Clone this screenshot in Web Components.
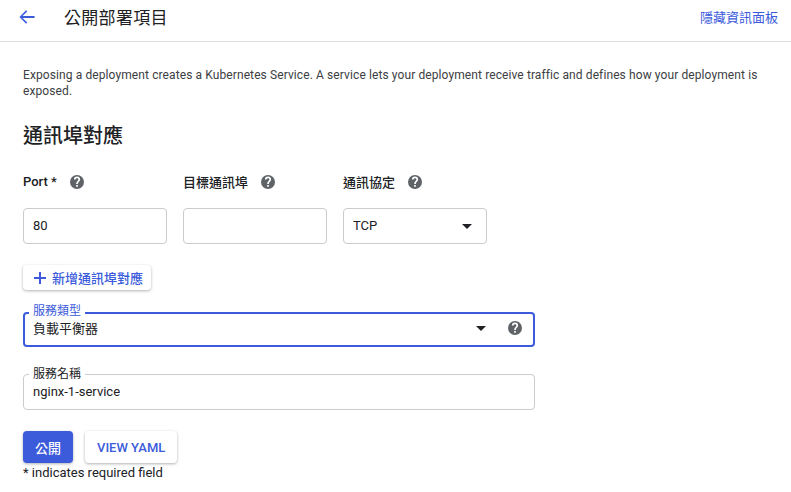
<!DOCTYPE html>
<html lang="zh-Hant">
<head>
<meta charset="utf-8">
<style>
  html, body { margin: 0; background: #fff; height: 492px; overflow: hidden; }
  body { font-family: Roboto, "Noto Sans CJK TC", sans-serif; color: #202124; }
</style>
</head>
<body>
<template id="help-icon-tpl">
  <style>
    :host { display: inline-flex; width: 14px; height: 14px; flex: none; }
    svg { width: 14px; height: 14px; fill: #5f6368; }
  </style>
  <svg viewBox="0.5 0.5 23 23"><path fill-rule="evenodd" d="M12 0.500a11.500 11.500 0 1 0 0 23 11.500 11.500 0 0 0 0-23zm1.400 19.400h-2.800v-2.800h2.800zm2.500-9-1.100 1.100c-.9.900-1.300 1.600-1.300 3.200h-2.800v-.7c0-1.300.5-2.500 1.400-3.400l1.500-1.500c.4-.4.700-1 .7-1.600a2.300 2.300 0 0 0-4.600 0H6.900a5.100 5.100 0 0 1 10.200 0c0 1.100-.4 2.100-1.200 2.900z"/></svg>
</template>

<template id="page-header-tpl">
  <style>
    :host { display: flex; align-items: center; height: 33px; padding: 0 13px 8px 19px; border-bottom: 1px solid #dadce0; }
    svg { width: 16px; height: 16px; fill: #3b5bdb; flex: none; }
    h1 { margin: 0 0 0 29px; font-size: 17px; font-weight: 400; color: #202124; letter-spacing: 0.3px; flex: 1; }
    a { font-size: 13px; color: #3b5bdb; }
  </style>
  <svg viewBox="0 0 18 18"><path d="M17.500 8H4l5.300-5.300L8 1.400.5 9 8 16.600l1.300-1.300L4 10h13.500z"/></svg>
  <h1><slot></slot></h1>
  <a><slot name="action"></slot></a>
</template>

<template id="field-label-tpl">
  <style>
    :host { display: flex; align-items: center; width: 144px; height: 16px; font-size: 13px; font-weight: 500; color: #202124; gap: 13px; }
    span { margin-top: -1px; }
  </style>
  <span><slot></slot></span><help-icon></help-icon>
</template>

<template id="text-box-tpl">
  <style>
    :host { display: flex; align-items: center; justify-content: space-between; width: 144px; height: 36px; box-sizing: border-box; border: 1px solid #ccc; border-radius: 4px; padding: 0 14px 0 9px; font-size: 13px; color: #202124; }
    span { margin-top: -1px; }
    i { width: 0; height: 0; border: 5px solid transparent; border-top-color: #202124; border-bottom: 0; display: var(--caret, none); }
  </style>
  <span><slot></slot></span><i></i>
</template>

<template id="outlined-field-tpl">
  <style>
    :host { display: block; width: 512px; }
    fieldset { margin: 0; padding: 0 14px 0 9px; box-sizing: border-box; width: 512px; height: 42px; border: 1px solid #ccc; border-radius: 4px; display: flex; align-items: center; font-size: 13px; color: #202124; }
    :host([focused]) fieldset { border: 2px solid #3b5bdb; padding: 0 11px 0 8px; height: 40px; }
    legend { font-size: 12px; line-height: 12px; padding: 0 4px; margin-left: -4px; color: #202124; }
    legend span { position: relative; top: var(--legend-shift, 0); }
    :host([focused]) legend { color: #3b5bdb; --legend-shift: -2px; }
    .row { display: flex; align-items: center; width: 100%; height: 100%; margin-top: var(--row-shift, -7px); }
    :host([focused]) .row { --row-shift: -10px; }
    .val { flex: 1; }
    i { width: 0; height: 0; border: 5px solid transparent; border-top-color: #202124; border-bottom: 0; margin: 2px 22px 0 0; }
    help-icon { margin-top: 2px; }
    :host(:not([focused])) i, :host(:not([focused])) help-icon { display: none; }
  </style>
  <fieldset>
    <legend><span></span></legend>
    <div class="row"><span class="val"><slot></slot></span><i></i><help-icon></help-icon></div>
  </fieldset>
</template>

<template id="ui-button-tpl">
  <style>
    :host { display: inline-flex; align-items: center; justify-content: center; box-sizing: border-box; height: var(--h, 32px); padding: 0 12px; border-radius: 4px; background: #fff; color: #3b5bdb; font-size: 13px; font-weight: 500; box-shadow: 0 1px 3px rgba(60,64,67,.4); gap: 6px; }
    :host([primary]) { background: #3b5bdb; color: #fff; }
    svg { width: 12px; height: 12px; fill: #3b5bdb; }
    :host(:not([add])) svg { display: none; }
  </style>
  <svg viewBox="0 0 12 12"><path d="M5 0h2v5h5v2H7v5H5V7H0V5h5z"/></svg><slot></slot>
</template>

<template id="expose-form-tpl">
  <style>
    :host { display: block; padding: 25px 23px 0; }
    p { margin: 0; font-size: 12px; line-height: 16px; color: #3c4043; width: 745px; letter-spacing: .1px; }
    h2 { margin: 23px 0 0; font-size: 20px; line-height: 28px; font-weight: 500; color: #202124; }
    .cols { display: grid; grid-template-columns: repeat(3, 144px); column-gap: 16px; }
    .labels { margin-top: 24px; }
    .inputs { margin-top: 18px; }
    .add { margin-top: 21px; display: block; height: 25px; }
    .type { margin-top: 17px; }
    .name { margin-top: 21px; }
    .actions { margin-top: 21px; display: flex; gap: 12px; }
    small { display: block; font-size: 13px; line-height: 16px; margin-top: 2px; color: #202124; }
  </style>
  <p>Exposing a deployment creates a Kubernetes Service. A service lets your deployment receive traffic and defines how your deployment is exposed.</p>
  <h2>通訊埠對應</h2>
  <div class="cols labels">
    <field-label>Port *</field-label>
    <field-label>目標通訊埠</field-label>
    <field-label>通訊協定</field-label>
  </div>
  <div class="cols inputs">
    <text-box>80</text-box>
    <text-box></text-box>
    <text-box style="--caret:block">TCP</text-box>
  </div>
  <div class="add"><ui-button add style="--h:25px;padding:0 8px 0 11px">新增通訊埠對應</ui-button></div>
  <outlined-field class="type" label="服務類型" focused>負載平衡器</outlined-field>
  <outlined-field class="name" label="服務名稱">nginx-1-service</outlined-field>
  <div class="actions">
    <ui-button primary>公開</ui-button>
    <ui-button>VIEW YAML</ui-button>
  </div>
  <small>* indicates required field</small>
</template>

<page-header>公開部署項目<span slot="action">隱藏資訊面板</span></page-header>
<expose-form></expose-form>

<script>
  // each element just stamps its template into an open shadow root
  function stamp(el, id) {
    const root = el.attachShadow({ mode: "open" });
    root.appendChild(document.getElementById(id).content.cloneNode(true));
    return root;
  }

  ["help-icon", "page-header", "field-label", "text-box", "ui-button", "expose-form"].forEach((name) => {
    customElements.define(name, class extends HTMLElement {
      constructor() {
        super();
        stamp(this, name + "-tpl");
      }
    });
  });

  class OutlinedField extends HTMLElement {
    constructor() {
      super();
      this.root = stamp(this, "outlined-field-tpl");
    }
    connectedCallback() {
      this.root.querySelector("legend span").textContent = this.getAttribute("label") || "";
    }
  }
  customElements.define("outlined-field", OutlinedField);
</script>
</body>
</html>
